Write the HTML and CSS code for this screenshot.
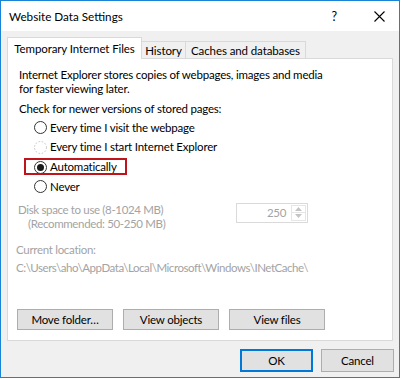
FILE: index.html
```html
<!DOCTYPE html>
<html>
<head>
<meta charset="utf-8">
<link rel="stylesheet" href="styles.css">
</head>
<body>
<div class="window">
  <div class="titlebar">
    <span class="title">Website Data Settings</span>
    <span class="help">?</span>
    <span class="close"><svg width="11" height="11" viewBox="0 0 11 11"><path d="M0.5 0.5 L10.5 10.5 M10.5 0.5 L0.5 10.5" stroke="#000" stroke-width="1.1" fill="none"/></svg></span>
  </div>
  <div class="client">
    <div class="tabs">
      <div class="tab active">Temporary Internet Files</div>
      <div class="tab history">History</div>
      <div class="tab caches">Caches and databases</div>
    </div>
    <div class="panel">
      <p class="intro"><span class="ln">Internet Explorer stores copies of webpages, images and media</span><span class="ln">for faster viewing later.</span></p>
      <p class="check">Check for newer versions of stored pages:</p>
      <div class="radios">
        <div class="radio"><svg class="rb" width="13" height="13" viewBox="0 0 13 13"><circle cx="6.5" cy="6.5" r="6" fill="#fff" stroke="#333" stroke-width="1"/></svg><span>Every time I visit the webpage</span></div>
        <div class="radio"><svg class="rb" width="13" height="13" viewBox="0 0 13 13"><circle cx="6.5" cy="6.5" r="6" fill="#fff" stroke="#c4c4c4" stroke-width="1" stroke-dasharray="1.6 1.6"/></svg><span>Every time I start Internet Explorer</span></div>
        <div class="radio"><span class="marked"><svg class="rb" width="13" height="13" viewBox="0 0 13 13"><circle cx="6.5" cy="6.5" r="6" fill="#fff" stroke="#333" stroke-width="1"/><circle cx="6.5" cy="6.5" r="3.5" fill="#1a1a1a"/></svg><span>Automatically</span></span></div>
        <div class="radio"><svg class="rb" width="13" height="13" viewBox="0 0 13 13"><circle cx="6.5" cy="6.5" r="6" fill="#fff" stroke="#333" stroke-width="1"/></svg><span>Never</span></div>
      </div>
      <div class="disk">
        <div class="disk-label">
          <div class="ln">Disk space to use (8-1024 MB)</div>
          <div class="ln rec">(Recommended: 50-250 MB)</div>
        </div>
        <div class="spinner">
          <span class="val">250</span>
          <span class="arrows">
            <span class="arr"><svg width="7" height="4" viewBox="0 0 7 4"><path d="M0 4 L3.5 0 L7 4 Z" fill="#c4c4c4"/></svg></span>
            <span class="arr"><svg width="7" height="4" viewBox="0 0 7 4"><path d="M0 0 L3.5 4 L7 0 Z" fill="#c4c4c4"/></svg></span>
          </span>
        </div>
      </div>
      <div class="loc">Current location:</div>
      <div class="path">C:\Users\aho\AppData\Local\Microsoft\Windows\INetCache\</div>
      <div class="panel-buttons">
        <div class="btn">Move folder…</div>
        <div class="btn">View objects</div>
        <div class="btn">View files</div>
      </div>
    </div>
    <div class="dialog-buttons">
      <div class="btn dlg default">OK</div>
      <div class="btn dlg">Cancel</div>
    </div>
  </div>
</div>
</body>
</html>
```

FILE: styles.css
```css
html, body {
  margin: 0;
  padding: 0;
  background: #ffffff;
}
body {
  font-family: Lato, "Noto Sans", sans-serif;
  font-size: 11.5px;
  letter-spacing: -0.2px;
  color: #000;
}
.window {
  width: 398px;
  height: 376px;
  border: 1px solid #1883d7;
  background: #f0f0f0;
  display: flex;
  flex-direction: column;
}
.titlebar {
  height: 30px;
  flex: none;
  background: #fff;
  display: flex;
  align-items: center;
}
.title {
  flex: 1;
  padding-left: 8px;
  line-height: 30px;
  font-size: 11.7px;
  letter-spacing: 0;
}
.help {
  font-size: 12.5px;
  letter-spacing: 0;
  margin-right: 37px;
}
.close {
  display: flex;
  margin-right: 14px;
}
.client {
  flex: 1;
  padding: 6px 6px 0 6px;
  display: flex;
  flex-direction: column;
}
.tabs {
  display: flex;
  align-items: flex-end;
  height: 22px;
  position: relative;
  z-index: 1;
  font-size: 11.5px;
  letter-spacing: -0.1px;
}
.tab {
  box-sizing: border-box;
  border: 1px solid #d9d9d9;
  border-bottom: none;
  background: #f0f0f0;
  height: 17px;
  margin-bottom: 1px;
  line-height: 18px;
  text-align: center;
  margin-left: -1px;
  white-space: nowrap;
}
.tab.active {
  margin-left: 0;
  width: 135px;
  height: 22px;
  margin-bottom: 0;
  background: #fff;
  line-height: 21px;
}
.tab.history { width: 45px; }
.tab.caches { width: 121px; }
.panel {
  box-sizing: border-box;
  height: 283px;
  margin-top: -1px;
  border: 1px solid #d9d9d9;
  background: #fff;
  padding: 9px 11px 0 11px;
  display: flex;
  flex-direction: column;
  line-height: 14px;
}
.intro, .check {
  margin: 0;
  white-space: nowrap;
}
.ln {
  display: block;
  height: 14px;
  line-height: 14px;
}
.check { margin-top: 6px; }
.radios {
  margin-top: 2px;
  margin-left: 15px;
  display: flex;
  flex-direction: column;
}
.radio {
  height: 19.67px;
  display: flex;
  align-items: center;
  white-space: nowrap;
}
.radio .rb {
  flex: none;
  margin-right: 3px;
}
.marked {
  position: relative;
  display: inline-flex;
  align-items: center;
}
.marked::after {
  content: "";
  position: absolute;
  left: -10px;
  right: -10px;
  top: -2px;
  bottom: -1px;
  border: 2px solid #c0141c;
}
.disk {
  margin-top: 6px;
  margin-left: -1px;
  display: flex;
  align-items: flex-start;
  color: #a3a3a3;
  letter-spacing: -0.35px;
}
.disk-label {
  width: 218px;
  flex: none;
  white-space: nowrap;
}
.rec { padding-left: 10px; }
.spinner {
  box-sizing: border-box;
  width: 72px;
  height: 20px;
  border: 1px solid #dadada;
  display: flex;
  align-items: center;
  margin-top: 0;
}
.val {
  flex: 1;
  text-align: right;
  padding-right: 5px;
}
.arrows {
  display: flex;
  flex-direction: column;
  width: 15px;
  height: 16px;
  margin-right: 1px;
}
.arr {
  box-sizing: border-box;
  flex: 1;
  border: 1px solid #e6e6e6;
  display: flex;
  align-items: center;
  justify-content: center;
}
.arr + .arr { margin-top: -1px; }
.loc {
  margin-top: 12px;
  margin-left: -3px;
  color: #a3a3a3;
  letter-spacing: -0.3px;
}
.path {
  margin-top: 4px;
  margin-left: -3px;
  color: #a3a3a3;
  white-space: nowrap;
  letter-spacing: -0.45px;
}
.panel-buttons {
  margin-top: 34px;
  margin-left: -2px;
  display: flex;
  gap: 10px;
}
.btn {
  box-sizing: border-box;
  width: 96px;
  height: 21px;
  border: 1px solid #adadad;
  background: #e1e1e1;
  display: flex;
  align-items: center;
  justify-content: center;
  line-height: 13px;
  white-space: nowrap;
}
.dialog-buttons {
  margin-top: 8px;
  margin-right: -1px;
  display: flex;
  justify-content: flex-end;
  gap: 8px;
}
.btn.dlg {
  width: 73px;
  height: 23px;
}
.btn.default {
  border: 2px solid #0078d7;
}
```
